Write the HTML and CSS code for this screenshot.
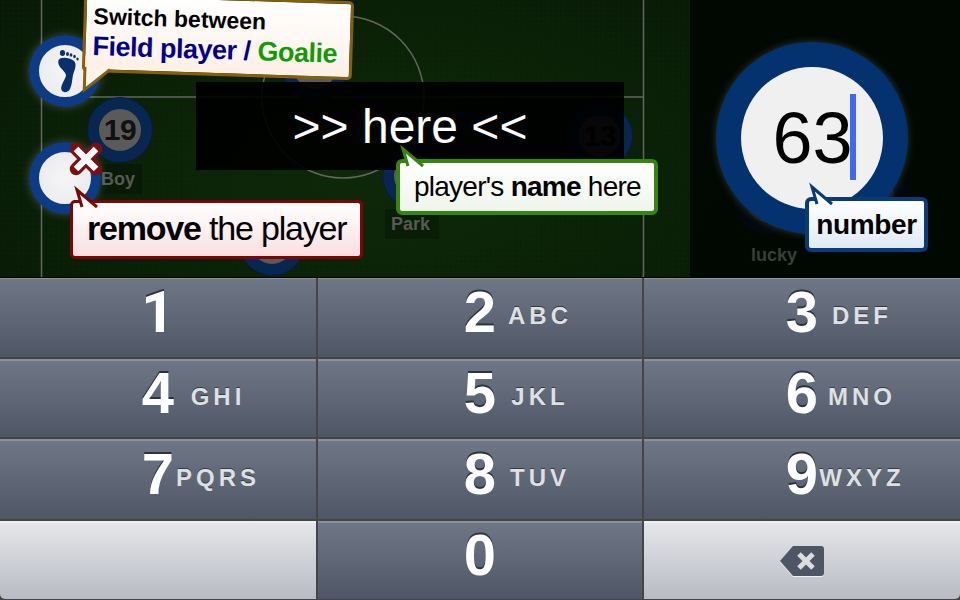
FILE: index.html
```html
<!DOCTYPE html>
<html lang="en">
<head>
<meta charset="utf-8">
<title>Player editor</title>
<link rel="stylesheet" href="styles.css">
</head>
<body>
<div class="app">
  <section class="field">
    <svg class="markings" width="960" height="277" viewBox="0 0 960 277">
      <g fill="none" stroke="#62665f" stroke-width="1.5">
        <path d="M41.5 0V277M643.5 0V277M41.5 97H643.5"/>
        <circle cx="343" cy="97" r="81"/>
      </g>
    </svg>

    <div class="player dim p-top"><span class="no">9</span></div>
    <div class="player dim p-19"><span class="no">19</span></div>
    <div class="player dim p-13"><span class="no">13</span></div>
    <div class="player dim p-park"></div>
    <div class="player dim p-bottom"><span class="no">8</span></div>
    <div class="player dim p-lucky"></div>
    <div class="player dim p-right"></div>
    <div class="player dim p-upper"></div>
    <span class="tag t-seol">SEOL</span>
    <span class="tag t-boy">Boy</span>
    <span class="tag t-park">Park</span>

    <div class="shade"></div>
    <span class="tag t-lucky">lucky</span>
    <div class="name-bar">&gt;&gt; here &lt;&lt;</div>

    <div class="player lit p-foot">
      <svg width="40" height="52" viewBox="0 0 40 52" fill="#0b2f6e">
        <path d="M15 13.5C19 12 25 13 29 16C32 19 30 24 28 30C27 35 27 40 25 44C23 48 18 48 16.5 45C15 42 19 36 21 31C21 27 17 25 15 22C13 19 12.5 15 15 13.5Z"/>
        <ellipse cx="17.5" cy="8" rx="2.6" ry="3"/>
        <ellipse cx="22.5" cy="9" rx="1.5" ry="1.9"/>
        <ellipse cx="26" cy="10" rx="1.4" ry="1.8"/>
        <ellipse cx="29.5" cy="11.5" rx="1.3" ry="1.7"/>
        <ellipse cx="32.5" cy="14" rx="1.2" ry="1.6"/>
      </svg>
    </div>
    <div class="player lit p-remove"></div>
    <svg class="remove-x" width="36" height="36" viewBox="0 0 36 36">
      <path class="x-out" d="M8 8L28 28M28 8L8 28"/>
      <path class="x-in" d="M8 8L28 28M28 8L8 28"/>
    </svg>

    <div class="number-ring">
      <div class="number-face"><span class="number-val">63</span><i class="caret"></i></div>
    </div>

    <div class="tip tip-brown">
      <svg class="tail tail-brown" width="30" height="26" viewBox="0 0 30 26"><path d="M3 1V24L28 3" fill="#fdf3ea" stroke="#85600f" stroke-width="3"/></svg>
      <div class="tip-l1">Switch between</div>
      <div class="tip-l2"><span class="blue">Field player /</span> <span class="green">Goalie</span></div>
    </div>
    <div class="tip tip-red">
      <svg class="tail tail-red" width="26" height="20" viewBox="0 0 26 20"><path d="M8 19L3 2L23 19" fill="#fff" stroke="#7c0505" stroke-width="3"/></svg>
      <b>remove</b> the player
    </div>
    <div class="tip tip-green">
      <svg class="tail tail-green" width="26" height="20" viewBox="0 0 26 20"><path d="M8 19L3 2L23 19" fill="#fff" stroke="#358510" stroke-width="3"/></svg>
      player's <b>name</b> here
    </div>
    <div class="tip tip-navy">
      <svg class="tail tail-navy" width="26" height="20" viewBox="0 0 26 20"><path d="M8 19L3 2L23 19" fill="#fff" stroke="#0a3a78" stroke-width="3"/></svg>
      <b>number</b>
    </div>
  </section>

  <section class="pad">
    <div class="key"><span class="d one">1</span></div>
    <div class="key"><span class="d">2</span><span class="l">ABC</span></div>
    <div class="key"><span class="d">3</span><span class="l">DEF</span></div>
    <div class="key"><span class="d">4</span><span class="l">GHI</span></div>
    <div class="key"><span class="d">5</span><span class="l">JKL</span></div>
    <div class="key"><span class="d">6</span><span class="l">MNO</span></div>
    <div class="key"><span class="d">7</span><span class="l">PQRS</span></div>
    <div class="key"><span class="d">8</span><span class="l">TUV</span></div>
    <div class="key"><span class="d">9</span><span class="l">WXYZ</span></div>
    <div class="key light corner-l"></div>
    <div class="key"><span class="d">0</span></div>
    <div class="key light corner-r">
      <svg class="backspace" width="46" height="32" viewBox="0 0 46 32">
        <path d="M14 1H42Q45 1 45 4V28Q45 31 42 31H14L1 16Z" fill="#f0f1f3" transform="translate(0 1)"/>
        <path d="M14 1H42Q45 1 45 4V28Q45 31 42 31H14L1 16Z" fill="#4e5565"/>
        <path d="M20 9L34 23M34 9L20 23" stroke="#dcdde1" stroke-width="5" fill="none"/>
      </svg>
    </div>
  </section>
</div>
</body>
</html>
```

FILE: styles.css
```css
* { box-sizing: border-box; }
html, body { margin: 0; padding: 0; background: #000; }
body { width: 960px; height: 600px; overflow: hidden; font-family: "Liberation Sans", Arial, sans-serif; }
.app { display: flex; flex-direction: column; width: 960px; height: 600px; }

/* pitch */
.field {
  position: relative; height: 278px; flex: none; overflow: hidden;
  border-bottom: 1px solid #000;
  background:
    radial-gradient(ellipse 560px 280px at 380px 170px, rgba(18,52,10,.6), rgba(0,0,0,0) 100%),
    repeating-linear-gradient(0deg, rgba(0,0,0,.07) 0 2px, rgba(0,0,0,0) 2px 5px),
    repeating-linear-gradient(90deg, rgba(0,0,0,.07) 0 2px, rgba(0,0,0,0) 2px 5px),
    #081a06;
}
.markings { position: absolute; left: 0; top: 0; }
.shade { position: absolute; left: 690px; top: 0; width: 270px; height: 277px; background: rgba(0,4,0,.82); }

.player { position: absolute; border-radius: 50%; display: flex; align-items: center; justify-content: center; }
.player.dim { width: 64px; height: 64px; background: #5a5a5a; border: 11px solid #08264f; box-shadow: 0 0 0 1px #061c3a; }
.no { font-weight: 700; font-size: 30px; color: #111; letter-spacing: -.5px; }
.p-19 { left: 88px; top: 98px; }
.p-top { left: 283px; top: 36px; }
.p-13 { left: 568px; top: 104px; }
.p-park { left: 383px; top: 144px; }
.p-bottom { left: 240px; top: 211px; }
.p-lucky { left: 735px; top: 169px; }
.p-right { left: 841px; top: 163px; }
.p-upper { left: 836px; top: 66px; }
.tag { position: absolute; font-weight: 700; font-size: 18px; color: #565a55; background: rgba(0,0,0,.22); padding: 4px 6px; line-height: 22px; }
.t-boy { left: 100px; top: 164px; padding: 4px 1px 4px 1px; width: 42px; }
.t-park { left: 385px; top: 209px; width: 54px; }
.t-seol { left: 286px; top: 107px; color: #222; background: none; }
.t-lucky { left: 745px; top: 240px; color: #3c3e3c; background: none; }

.name-bar {
  position: absolute; left: 196px; top: 82px; width: 428px; height: 88px;
  background: rgba(0,0,0,.92); color: #fff; font-size: 48px; line-height: 90px; text-align: center;
}

.player.lit {
  width: 72px; height: 72px; left: 29px; background: radial-gradient(circle, #f5f5f6 0, #e8e9ec 100%);
  border: 10px solid #0d3b86; box-shadow: 0 0 10px rgba(255,255,255,.22);
}
.p-foot { top: 35px; }
.p-remove { top: 142px; }
.remove-x { position: absolute; left: 68px; top: 141px; }
.x-out, .x-in { fill: none; stroke-linecap: round; }
.x-out { stroke: #7a1010; stroke-width: 12.5; }
.x-in { stroke: #fff; stroke-width: 6.5; stroke-linecap: butt; }

.number-ring {
  position: absolute; left: 716px; top: 42px; width: 192px; height: 192px; border-radius: 50%;
  background: #03326f; box-shadow: 0 0 8px rgba(255,255,255,.18);
  display: flex; align-items: center; justify-content: center;
}
.number-face {
  width: 142px; height: 142px; border-radius: 50%;
  background: #f0f0f1; display: flex; align-items: center; justify-content: center; position: relative;
}
.number-val { font-size: 72px; color: #000; line-height: 1; margin-left: 1px; }
.caret { position: absolute; left: 109px; top: 27px; width: 6px; height: 86px; background: #4466ee; }

/* callouts */
.tip { position: absolute; color: #000; border-style: solid; border-radius: 5px; white-space: nowrap; }
.tail { position: absolute; overflow: visible; }
.tip-brown {
  left: 83px; top: -3px; width: 270px; height: 79px; padding: 7px 0 0 7px; border-width: 3px; border-color: #85600f;
  background: linear-gradient(#fff, #fdf0e5); transform: rotate(1.8deg);
}
.tail-brown { left: -3px; bottom: -23px; }
.tip-l1 { font-size: 23px; font-weight: 700; line-height: 27px; }
.tip-l2 { font-size: 27px; font-weight: 700; line-height: 32px; letter-spacing: -.5px; }
.blue { color: #00008e; }
.green { color: #149a07; }
.tip-red {
  left: 70px; top: 200px; width: 293px; height: 59px; border-width: 3px; border-color: #7c0505;
  background: linear-gradient(#fff, #f9dfe2); font-size: 34px; line-height: 51px; padding-left: 14px; letter-spacing: -1.2px;
}
.tail-red { left: 1px; top: -15px; }
.tip-green {
  left: 396px; top: 159px; width: 262px; height: 56px; border-width: 4px; border-color: #358510; border-radius: 6px;
  background: linear-gradient(#fff, #eef5ea); font-size: 28px; line-height: 48px; padding-left: 14px; letter-spacing: -.75px;
}
.tail-green { left: 0; top: -16px; }
.tip-navy {
  left: 805px; top: 197px; width: 123px; height: 55px; border-width: 4px; border-color: #0a3a78; border-radius: 6px;
  background: linear-gradient(#fff, #dfeaf5); font-size: 28px; line-height: 48px; text-align: center; letter-spacing: -.4px;
}
.tail-navy { left: 0; top: -16px; }

/* keypad */
.pad {
  flex: 1; display: grid; grid-template-columns: 316px 324px 316px; grid-template-rows: 80px 78px 80px 78px;
  column-gap: 2px; row-gap: 2px; background: #454545; margin-top: -1px;
}
.key {
  display: grid; grid-template-columns: 1fr 34px 1fr; align-items: center;
  background: linear-gradient(#6f7685, #4f5666); border-top: 2px solid #8b909c;
}
.d {
  grid-column: 2; text-align: center; font-size: 58px; font-weight: 700; line-height: 60px; color: #fff;
  text-shadow: 0 -2px 0 #2d3240; margin-top: -12px;
}
.one { font-family: Roboto, "Liberation Sans", sans-serif; }
.l {
  grid-column: 3; width: 86px; text-align: center; font-size: 24px; font-weight: 700; letter-spacing: 4px; color: #dfe0e4;
  text-shadow: 0 -1px 0 #343946; margin-top: -4px;
}
.key.light { background: linear-gradient(#e5e6e9, #b8bbc3); border-top: 2px solid #eeeff1; display: flex; align-items: center; justify-content: center; }
.corner-l { border-bottom-left-radius: 5px; }
.corner-r { border-bottom-right-radius: 5px; }
```
